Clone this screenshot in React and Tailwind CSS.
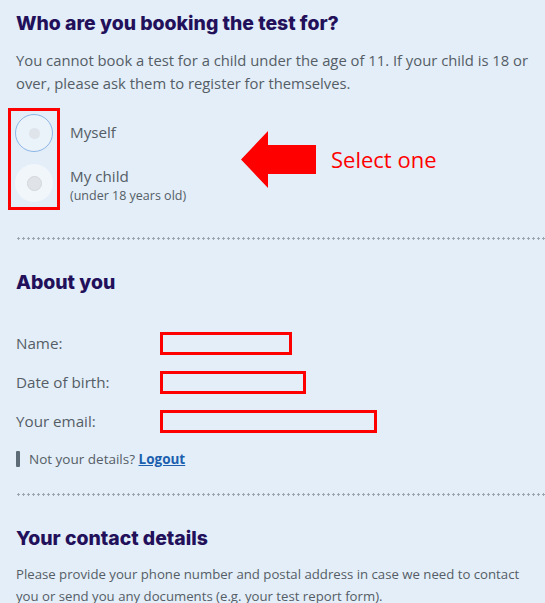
import React from 'react';

const Heading = ({ children, className = '' }) => (
  <h2 className={`text-[19.4px] leading-[26px] font-extrabold text-[#22105a] font-['Inter',sans-serif] ${className}`}>{children}</h2>
);

const Divider = () => (
  <div className="ml-4 h-[3px] bg-[radial-gradient(circle,#9ca7b3_1.1px,transparent_1.4px)] bg-[length:5px_3px]" />
);

const Field = ({ label, width }) => (
  <div className="flex items-center h-[39px]">
    <span className="w-[144px]">{label}</span>
    <div className={`h-[23px] border-[3px] border-[#ff0000] ${width}`} />
  </div>
);

export default function App() {
  return (
    <div className="w-[545px] h-[603px] overflow-hidden bg-[#e3eef8] text-[#555d66] font-['Open_Sans',sans-serif] text-[14.8px]">
      <div className="px-4 pt-[10px]">
        <Heading>Who are you booking the test for?</Heading>
        <p className="mt-[13px] leading-[23px]">You cannot book a test for a child under the age of 11. If your child is 18 or over, please ask them to register for themselves.</p>
      </div>

      <div className="relative flex items-start mt-[13px] h-[104px]">
        <div className="ml-2 w-[52px] h-[102px] border-[3px] border-[#ff0000] flex flex-col items-center pt-[3px] gap-[12px]">
          <div className="w-[38px] h-[38px] rounded-full border border-[#8db6e6] bg-[#eaf2fa] flex items-center justify-center">
            <div className="w-[11px] h-[11px] rounded-full bg-[#dfe4ea]" />
          </div>
          <div className="w-[38px] h-[38px] rounded-full bg-[#f1f6fb] flex items-center justify-center">
            <div className="w-[15px] h-[15px] rounded-full bg-[#e0e3e7] border border-[#d3d7dc]" />
          </div>
        </div>
        <div className="ml-[10px] flex flex-col text-[15.2px]">
          <span className="mt-[13px] leading-[22px]">Myself</span>
          <span className="mt-[22px] leading-[22px]">My child</span>
          <span className="text-[12.5px] leading-[17px]">(under 18 years old)</span>
        </div>
        <div className="absolute left-[241px] top-[23px] flex items-center">
          <svg width="76" height="57" viewBox="0 0 76 57">
            <polygon points="0,28.5 27,0 27,14 75,14 75,43 27,43 27,57" fill="#ff0000" />
          </svg>
          <span className="ml-[14px] text-[22px] text-[#ff0000] font-['Open_Sans',sans-serif]">Select one</span>
        </div>
      </div>

      <div className="mt-[25px]"><Divider /></div>

      <div className="px-4 pt-[29px]">
        <Heading>About you</Heading>
        <div className="mt-[29px] text-[15.2px]">
          <Field label="Name:" width="w-[132px]" />
          <Field label="Date of birth:" width="w-[146px]" />
          <Field label="Your email:" width="w-[217px]" />
        </div>
        <div className="flex items-center mt-[8px] text-[13.5px]">
          <div className="w-[4px] h-[16px] rounded-[1px] bg-[#5c6b75]" />
          <span className="ml-[9px]">Not your details? <a href="#" className="font-bold text-[#1b5fae] underline">Logout</a></span>
        </div>
      </div>

      <div className="mt-[24px]"><Divider /></div>

      <div className="pl-4 pr-2 pt-[29px]">
        <Heading>Your contact details</Heading>
        <p className="mt-[12px] leading-[22px] text-[13.2px]">Please provide your phone number and postal address in case we need to contact you or send you any documents (e.g. your test report form).</p>
      </div>
    </div>
  );
}
